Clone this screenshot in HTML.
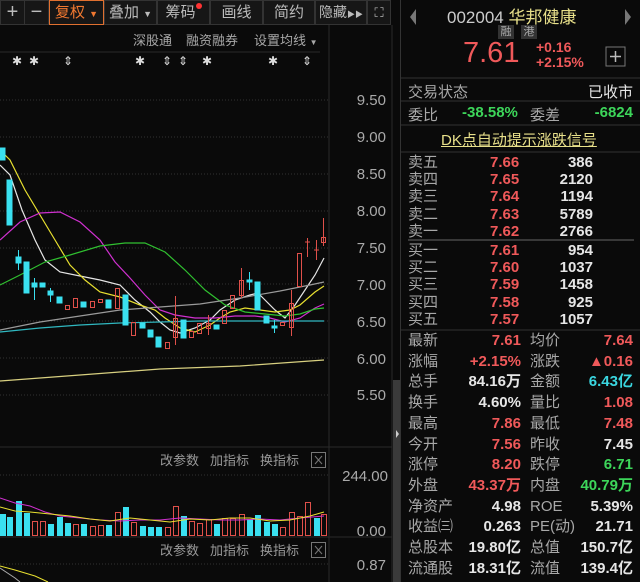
<!DOCTYPE html>
<html><head><meta charset="utf-8"><style>
*{margin:0;padding:0;box-sizing:border-box}
body{width:640px;height:582px;background:#0a0a0a;overflow:hidden;position:relative;font-family:"Liberation Sans","Noto Sans CJK SC",sans-serif;color:#ccc}
.a{position:absolute;white-space:nowrap}
.tb{position:absolute;top:0;height:25px;background:#161616;border:1px solid #333;color:#bbb;font-size:15px;text-align:center;line-height:23px;white-space:nowrap;overflow:hidden}
.r{color:#f0595a}.g{color:#3dd65a}.c{color:#3ad6e0}.w{color:#e6e6e6}.l{color:#a8a8a8}
.rp{position:absolute;left:401px;width:239px;font-size:15px}
</style></head><body>
<div class="tb" style="left:0;width:25px;font-size:20px">+</div>
<div class="tb" style="left:24px;width:25px;font-size:20px">−</div>
<div class="tb" style="left:49px;width:55px;border-color:#e07030;color:#f07830">复权 <span style="font-size:9px">▼</span></div>
<div class="tb" style="left:104px;width:53px">叠加 <span style="font-size:9px">▼</span></div>
<div class="tb" style="left:157px;width:53px">筹码<span style="display:inline-block;width:6px;height:6px;border-radius:3px;background:#f33;vertical-align:8px"></span></div>
<div class="tb" style="left:210px;width:53px">画线</div>
<div class="tb" style="left:263px;width:52px">简约</div>
<div class="tb" style="left:315px;width:52px;font-size:14px">隐藏<span style="font-size:8px">▶▶</span></div>
<div class="tb" style="left:367px;width:24px;font-size:13px">⛶</div>
<div class="a l" style="left:133px;top:30px;font-size:13px">深股通</div>
<div class="a l" style="left:186px;top:30px;font-size:13px">融资融券</div>
<div class="a l" style="left:254px;top:30px;font-size:13px">设置均线 <span style="font-size:8px">▼</span></div>
<svg class="a" style="left:0;top:0" width="400" height="582">
<g stroke="#2a2a2a"><line x1="329" y1="25" x2="329" y2="582"/><line x1="392" y1="25" x2="392" y2="582"/><line x1="0" y1="52" x2="320" y2="52"/><line x1="0" y1="447" x2="392" y2="447"/><line x1="0" y1="537" x2="392" y2="537"/></g>
<g stroke="#333" stroke-dasharray="1,2"><line x1="0" y1="100" x2="329" y2="100"/><line x1="0" y1="137" x2="329" y2="137"/><line x1="0" y1="174" x2="329" y2="174"/><line x1="0" y1="211" x2="329" y2="211"/><line x1="0" y1="248" x2="329" y2="248"/><line x1="0" y1="284" x2="329" y2="284"/><line x1="0" y1="321" x2="329" y2="321"/><line x1="0" y1="358" x2="329" y2="358"/><line x1="0" y1="395" x2="329" y2="395"/><line x1="0" y1="475" x2="329" y2="475"/><line x1="0" y1="564" x2="329" y2="564"/></g>
<rect x="393" y="380" width="7" height="202" fill="#3a3a3a"/>
<g fill="#ddd" font-size="12" font-family="Liberation Sans">
<text x="12" y="65">✱</text><text x="29" y="65">✱</text><text x="63" y="65">⇕</text><text x="135" y="65">✱</text><text x="162" y="65">⇕</text><text x="178" y="65">⇕</text><text x="202" y="65">✱</text><text x="268" y="65">✱</text><text x="302" y="65">⇕</text></g>
<g fill="#aaa" font-size="15" text-anchor="end" font-family="Liberation Sans">
<text x="386" y="105">9.50</text><text x="386" y="142">9.00</text><text x="386" y="179">8.50</text><text x="386" y="216">8.00</text><text x="386" y="253">7.50</text><text x="386" y="290">7.00</text><text x="386" y="327">6.50</text><text x="386" y="364">6.00</text><text x="386" y="400">5.50</text><text x="388" y="481">244.00</text><text x="386" y="536">0.00</text><text x="386" y="570">0.87</text></g>
<g fill="none" stroke-width="1.2">
<polyline stroke="#e6e6e6" points="0,165 10,175 22,210 35,240 45,260 60,272 80,276 100,280 120,285 135,300 150,312 160,322 170,330 180,333 195,328 210,320 220,310 235,300 250,295 258,293 265,300 275,310 285,318 295,305 305,290 315,275 324,258"/>
<polyline stroke="#e8e030" points="0,150 10,160 25,190 40,215 55,240 70,265 85,280 100,292 120,297 140,305 155,310 165,318 180,328 195,332 210,325 220,318 230,312 245,308 260,310 275,312 290,310 300,305 315,292 324,286"/>
<polyline stroke="#d030d0" points="0,240 20,222 40,213 60,212 80,222 100,240 115,262 130,278 145,295 160,310 175,315 195,318 215,318 235,316 255,316 270,318 285,322 300,318 315,308 324,304"/>
<polyline stroke="#30c030" points="0,285 20,275 45,262 70,255 100,246 125,243 145,243 165,252 185,270 205,290 225,305 245,312 265,314 285,316 300,314 315,309 324,308"/>
<polyline stroke="#9a9a9a" points="0,330 40,322 80,316 120,310 160,307 200,304 240,298 280,291 310,285 324,282"/>
<polyline stroke="#30b8c0" points="0,332 40,328 80,325 120,323 160,322 200,321 240,321 280,321 324,321"/>
<polyline stroke="#d8d080" points="0,381 80,375 160,369 240,366 324,360"/>
</g>
<g stroke-width="1">
<g fill="#3ae0f0" stroke="#3ae0f0">
<rect x="0" y="148" width="5" height="12"/><rect x="7" y="180" width="5" height="45"/><rect x="16" y="257" width="5" height="6"/><line x1="18.5" y1="250" x2="18.5" y2="270"/><rect x="24" y="262" width="5" height="31"/><rect x="32" y="283" width="5" height="4"/><line x1="34.5" y1="278" x2="34.5" y2="300"/><rect x="40" y="283" width="5" height="4"/><rect x="48" y="291" width="5" height="4"/><line x1="50.5" y1="288" x2="50.5" y2="302"/><rect x="57" y="297" width="5" height="6"/><rect x="81" y="302" width="5" height="5"/><rect x="106" y="300" width="5" height="8"/><rect x="123" y="295" width="5" height="30"/><rect x="140" y="323" width="5" height="5"/><rect x="148" y="330" width="5" height="7"/><rect x="156" y="337" width="5" height="10"/><rect x="181" y="320" width="5" height="18"/><rect x="214" y="325" width="5" height="4"/><line x1="249.5" y1="272" x2="249.5" y2="290"/><rect x="247" y="280" width="5" height="2"/><rect x="255" y="282" width="5" height="28"/><rect x="264" y="316" width="5" height="7"/><rect x="272" y="326" width="5" height="2"/><line x1="274.5" y1="320" x2="274.5" y2="333"/></g>
<g fill="none" stroke="#e0504a">
<rect x="65.5" y="305.5" width="4" height="4"/><rect x="73.5" y="298.5" width="4" height="9"/><rect x="90.5" y="301.5" width="4" height="6"/><rect x="98.5" y="299.5" width="4" height="3"/><rect x="115.5" y="288.5" width="4" height="20"/><rect x="131.5" y="322.5" width="4" height="13"/><rect x="165.5" y="342.5" width="4" height="6"/><rect x="173.5" y="318.5" width="4" height="19"/><line x1="175.5" y1="296" x2="175.5" y2="345"/><rect x="189.5" y="331.5" width="4" height="6"/><rect x="197.5" y="323.5" width="4" height="10"/><rect x="206.5" y="323.5" width="4" height="5"/><line x1="208.5" y1="315" x2="208.5" y2="335"/><rect x="222.5" y="310.5" width="4" height="13"/><rect x="230.5" y="295.5" width="4" height="13"/><rect x="239.5" y="280.5" width="4" height="15"/><line x1="241.5" y1="268" x2="241.5" y2="298"/><rect x="280.5" y="322.5" width="4" height="3"/><rect x="289.5" y="303.5" width="4" height="24"/><line x1="291.5" y1="290" x2="291.5" y2="336"/><rect x="297.5" y="253.5" width="4" height="33"/><line x1="307.5" y1="238" x2="307.5" y2="257"/><line x1="305" y1="242" x2="310" y2="242"/><line x1="316.5" y1="240" x2="316.5" y2="260"/><line x1="314" y1="250" x2="319" y2="250"/><rect x="321.5" y="237.5" width="4" height="5"/><line x1="323.5" y1="218" x2="323.5" y2="246"/></g>
</g>
<g fill="#3ae0f0"><rect x="0" y="514" width="6" height="22"/><rect x="7" y="517" width="6" height="19"/><rect x="16" y="501" width="6" height="35"/><rect x="24" y="513" width="6" height="23"/><rect x="48" y="524" width="6" height="12"/><rect x="57" y="517" width="6" height="19"/><rect x="65" y="523" width="6" height="13"/><rect x="81" y="524" width="6" height="12"/><rect x="106" y="525" width="6" height="11"/><rect x="123" y="507" width="6" height="29"/><rect x="140" y="526" width="6" height="10"/><rect x="148" y="527" width="6" height="9"/><rect x="156" y="527" width="6" height="9"/><rect x="181" y="516" width="6" height="20"/><rect x="214" y="524" width="6" height="12"/><rect x="247" y="519" width="6" height="17"/><rect x="255" y="515" width="6" height="21"/><rect x="264" y="522" width="6" height="14"/><rect x="272" y="524" width="6" height="12"/><rect x="314" y="518" width="6" height="18"/></g>
<g fill="none" stroke="#e0504a"><rect x="32.5" y="521.5" width="5" height="14"/><rect x="40.5" y="521.5" width="5" height="14"/><rect x="73.5" y="524.5" width="5" height="11"/><rect x="90.5" y="526.5" width="5" height="9"/><rect x="98.5" y="525.5" width="5" height="10"/><rect x="115.5" y="512.5" width="5" height="23"/><rect x="131.5" y="522.5" width="5" height="13"/><rect x="165.5" y="527.5" width="5" height="8"/><rect x="173.5" y="506.5" width="5" height="29"/><rect x="189.5" y="521.5" width="5" height="14"/><rect x="197.5" y="523.5" width="5" height="12"/><rect x="206.5" y="519.5" width="5" height="16"/><rect x="222.5" y="518.5" width="5" height="17"/><rect x="230.5" y="518.5" width="5" height="17"/><rect x="239.5" y="514.5" width="5" height="21"/><rect x="280.5" y="527.5" width="5" height="8"/><rect x="289.5" y="512.5" width="5" height="23"/><rect x="297.5" y="516.5" width="5" height="19"/><rect x="305.5" y="502.5" width="5" height="33"/><rect x="321.5" y="514.5" width="5" height="21"/></g>
<g fill="none" stroke-width="1"><polyline stroke="#d030d0" points="0,498 15,503 30,506 45,512 60,516 80,518 100,520 120,521 140,520 160,520 180,518 200,519 220,520 240,520 260,519 280,520 300,518 324,516"/><polyline stroke="#e8e030" points="0,507 15,511 30,512 50,514 70,516 90,519 110,521 130,518 150,520 170,522 190,519 210,520 230,518 250,518 270,521 290,520 310,516 324,512"/></g>
<polyline fill="none" stroke="#e8e030" points="0,566 15,570 35,576 48,582"/><polyline fill="none" stroke="#aaa" points="0,568 15,578 20,582"/>
<g fill="#999" font-size="13" font-family="Liberation Sans,Noto Sans CJK SC"><text x="160" y="465">改参数</text><text x="210" y="465">加指标</text><text x="260" y="465">换指标</text><text x="160" y="555">改参数</text><text x="210" y="555">加指标</text><text x="260" y="555">换指标</text></g>
<g fill="none" stroke="#777"><rect x="311.5" y="452.5" width="14" height="15"/><path d="M315 456l7 8M322 456l-7 8"/><rect x="311.5" y="542.5" width="14" height="15"/><path d="M315 546l7 8M322 546l-7 8"/></g>
<path d="M396 430l3 4l-3 4z" fill="#ccc"/>
</svg>
<div class="a" style="left:400px;top:0;width:1px;height:582px;background:#333"></div>
<svg class="a" style="left:401px;top:0" width="239" height="582">
<path d="M15 9l-6 8l6 8z" fill="#777"/><path d="M224 9l6 8l-6 8z" fill="#777"/>
<rect x="205" y="47" width="19" height="19" fill="none" stroke="#777"/><path d="M214.5 51v11M209 56.5h11" stroke="#bbb" stroke-width="1.5"/>
<g stroke="#333"><line x1="0" y1="78" x2="239" y2="78"/><line x1="0" y1="101" x2="239" y2="101"/><line x1="0" y1="125" x2="239" y2="125"/><line x1="0" y1="152" x2="239" y2="152"/><line x1="0" y1="330" x2="239" y2="330"/></g>
<line x1="7" y1="240" x2="233" y2="240" stroke="#666"/>
</svg>
<div class="a w" style="left:447px;top:3px;font-size:17px;color:#ccc">002004 <span style="color:#e8e08a">华邦健康</span></div>
<div class="a" style="left:498px;top:25px;width:16px;height:14px;background:#333;font-size:11px;line-height:14px;text-align:center;color:#aaa">融</div>
<div class="a" style="left:521px;top:25px;width:16px;height:14px;background:#333;font-size:11px;line-height:14px;text-align:center;color:#aaa">港</div>
<div class="a r" style="left:463px;top:37px;font-size:29px">7.61</div>
<div class="a r" style="left:536px;top:40px;font-size:14px;line-height:15px;font-weight:bold">+0.16<br>+2.15%</div>
<div class="rp" style="top:81px;height:20px">
<span class="a l" style="left:7px;top:0">交易状态</span><span class="a w" style="right:7px;top:0">已收市</span></div>
<div class="rp" style="top:104px;height:20px">
<span class="a l" style="left:7px">委比</span><span class="a g" style="left:61px;font-weight:bold">-38.58%</span><span class="a l" style="left:129px">委差</span><span class="a g" style="right:7px;font-weight:bold">-6824</span></div>
<div class="a" style="left:441px;top:129px;font-size:15px;color:#e8e08a;text-decoration:underline">DK点自动提示涨跌信号</div>
<div class="rp" style="top:154px;line-height:17.2px;font-size:15px">
<div class="a l" style="left:7px">卖五<br>卖四<br>卖三<br>卖二<br>卖一</div>
<div class="a r" style="left:89px;font-weight:bold">7.66<br>7.65<br>7.64<br>7.63<br>7.62</div>
<div class="a w" style="right:47px;text-align:right;font-weight:bold">386<br>2120<br>1194<br>5789<br>2766</div></div>
<div class="rp" style="top:242px;line-height:17.2px;font-size:15px">
<div class="a l" style="left:7px">买一<br>买二<br>买三<br>买四<br>买五</div>
<div class="a r" style="left:89px;font-weight:bold">7.61<br>7.60<br>7.59<br>7.58<br>7.57</div>
<div class="a w" style="right:47px;text-align:right;font-weight:bold">954<br>1037<br>1458<br>925<br>1057</div></div>
<div class="rp" style="top:331px;line-height:20.7px;font-size:15px">
<div class="a l" style="left:7px">最新<br>涨幅<br>总手<br>换手<br>最高<br>今开<br>涨停<br>外盘<br>净资产<br>收益㈢<br>总股本<br>流通股</div>
<div class="a" style="right:119px;text-align:right;font-weight:bold"><span class="r">7.61</span><br><span class="r">+2.15%</span><br><span class="w">84.16万</span><br><span class="w">4.60%</span><br><span class="r">7.86</span><br><span class="r">7.56</span><br><span class="r">8.20</span><br><span class="r">43.37万</span><br><span class="w">4.98</span><br><span class="w">0.263</span><br><span class="w">19.80亿</span><br><span class="w">18.31亿</span></div>
<div class="a l" style="left:129px">均价<br>涨跌<br>金额<br>量比<br>最低<br>昨收<br>跌停<br>内盘<br>ROE<br>PE(动)<br>总值<br>流值</div>
<div class="a" style="right:7px;text-align:right;font-weight:bold"><span class="r">7.64</span><br><span class="r">▲0.16</span><br><span class="c">6.43亿</span><br><span class="r">1.08</span><br><span class="r">7.48</span><br><span class="w">7.45</span><br><span class="g">6.71</span><br><span class="g">40.79万</span><br><span class="w">5.39%</span><br><span class="w">21.71</span><br><span class="w">150.7亿</span><br><span class="w">139.4亿</span></div></div>
</body></html>
